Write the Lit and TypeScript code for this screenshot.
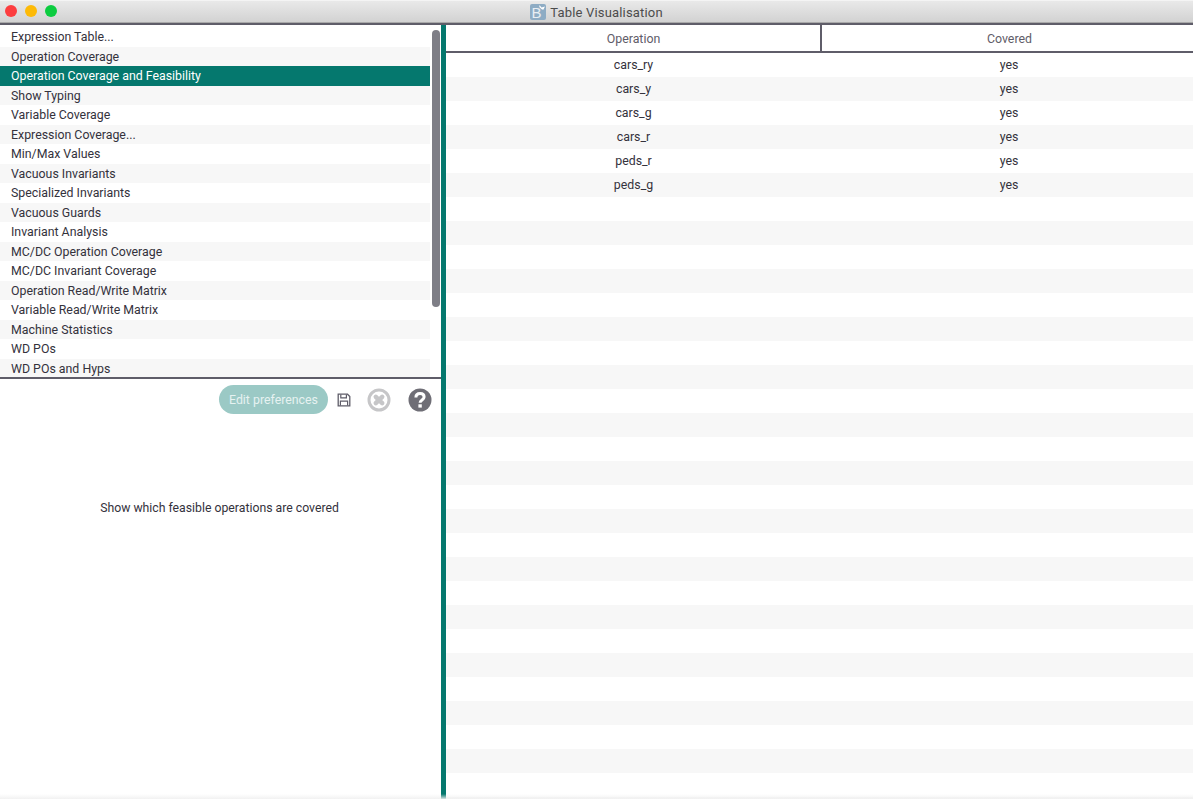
import { LitElement, html, css, svg } from 'lit';
import { customElement, state } from 'lit/decorators.js';

const TASKS = [
  'Expression Table...',
  'Operation Coverage',
  'Operation Coverage and Feasibility',
  'Show Typing',
  'Variable Coverage',
  'Expression Coverage...',
  'Min/Max Values',
  'Vacuous Invariants',
  'Specialized Invariants',
  'Vacuous Guards',
  'Invariant Analysis',
  'MC/DC Operation Coverage',
  'MC/DC Invariant Coverage',
  'Operation Read/Write Matrix',
  'Variable Read/Write Matrix',
  'Machine Statistics',
  'WD POs',
  'WD POs and Hyps',
];

const RESULTS = ['cars_ry', 'cars_y', 'cars_g', 'cars_r', 'peds_r', 'peds_g'];
const ROW_COUNT = 32;

const saveIcon = svg`<svg class="save" viewBox="0 0 14 14" width="14" height="14">
  <path fill="none" stroke="#5f5d69" stroke-width="1.3" d="M1.2 1.2h9.3l2.3 2.3v9.3H1.2z"/>
  <path fill="none" stroke="#5f5d69" stroke-width="1.2" d="M3.8 1.5v3.4h5.6V1.5M3.4 12.5V8.2h7.2v4.3"/>
</svg>`;

const cancelIcon = svg`<svg viewBox="0 0 24 24" width="24" height="24">
  <circle cx="12" cy="12" r="10" fill="none" stroke="#c6c6c8" stroke-width="3"/>
  <path stroke="#c6c6c8" stroke-width="4.500" stroke-linecap="round" d="M8.800 8.800l6.400 6.400M15.200 8.800l-6.400 6.400"/>
</svg>`;

const helpIcon = svg`<svg viewBox="0 0 24 24" width="24" height="24">
  <circle cx="12" cy="12" r="11.500" fill="#6f6e76"/>
  <path fill="none" stroke="#fff" stroke-width="3" d="M7.900 9.600c0-2.500 1.800-4 4.200-4s4 1.400 4 3.500c0 2.900-4 2.900-4 5.700"/>
  <rect x="10.400" y="16.300" width="3.400" height="3.300" fill="#fff"/>
</svg>`;

@customElement('app-root')
export class AppRoot extends LitElement {
  @state() selected = 2;

  static styles = css`
    :host {
      display: block;
      width: 1193px;
      height: 799px;
      overflow: hidden;
      position: relative;
      background: #fff;
      color: #34323c;
      font-family: Roboto, 'Liberation Sans', sans-serif;
      font-size: 12.35px;
    }

    .titlebar {
      height: 23px;
      display: flex;
      align-items: center;
      justify-content: center;
      position: relative;
      background: linear-gradient(#e9e9e9, #d2d2d2);
      border-top: 1px solid #f4f4f4;
      box-sizing: border-box;
      border-bottom: 1px solid #a9a9a9;
      color: #4c4c4c;
      font-size: 13px;
      letter-spacing: 0.18px;
      gap: 4px;
    }
    .lights {
      position: absolute;
      left: 5px;
      top: 4px;
      display: flex;
      gap: 8px;
    }
    .light {
      width: 12px;
      height: 12px;
      border-radius: 50%;
    }
    .red { background: #fc3d3f; }
    .yellow { background: #fdba07; }
    .green { background: #0ccc40; }
    .appicon {
      width: 16px;
      height: 16px;
      display: block;
    }
    .appicon text {
      font-family: 'Liberation Sans', sans-serif;
      font-size: 15px;
      fill: #e8eef3;
    }
    .title { padding-top: 1px; }

    .main {
      height: 776px;
      display: grid;
      grid-template-columns: 441px 5px 1fr;
      border-top: 2px solid #5f5d69;
      box-sizing: border-box;
    }
    .left {
      display: flex;
      flex-direction: column;
      min-height: 0;
    }
    .divider { background: #05786e; }

    .list {
      height: 352px;
      overflow: hidden;
      position: relative;
      padding-top: 2px;
      box-sizing: border-box;
      flex: none;
    }
    .task {
      height: 19.5px;
      width: 430px;
      padding: 1px 0 0 11px;
      box-sizing: border-box;
      line-height: 19.5px;
      white-space: nowrap;
    }
    .task.alt { background: #f7f7f7; }
    .task.sel { background: #05786e; color: #fff; }
    .scroll {
      position: absolute;
      left: 432px;
      top: 5px;
      width: 8px;
      height: 277px;
      border-radius: 4px;
      background: #7e7e86;
    }

    .hsplit {
      height: 2px;
      background: #5f5d69;
      flex: none;
    }
    .detail {
      flex: 1;
      display: flex;
      flex-direction: column;
    }
    .tools {
      display: flex;
      align-items: center;
      height: 29px;
      margin-top: 6px;
      padding-left: 219px;
    }
    .pref {
      width: 109px;
      height: 29px;
      border-radius: 15px;
      background: #9bc9c5;
      color: #e6f2f1;
      display: flex;
      align-items: center;
      justify-content: center;
    }
    .save { margin-left: 9px; }
    .cancel {
      margin-left: 16px;
      display: flex;
    }
    .help {
      margin-left: 17px;
      display: flex;
    }
    .desc {
      margin-top: 86px;
      text-align: center;
      width: 439px;
      line-height: 16px;
      font-size: 12.25px;
    }

    .right {
      min-width: 0;
      display: flex;
      flex-direction: column;
    }
    .thead, .row {
      display: grid;
      grid-template-columns: 375px 376px;
      text-align: center;
      flex: none;
    }
    .thead {
      height: 28px;
      box-sizing: border-box;
      border-bottom: 2px solid #5f5d69;
      color: #5f5d69;
      line-height: 28px;
    }
    .thead div + div {
      border-left: 2px solid #5f5d69;
      margin-left: -1px;
      line-height: 28px;
    }
    .row {
      height: 24px;
      line-height: 24px;
    }
    .row.alt { background: #f7f7f7; }

    .fade {
      position: absolute;
      left: 0;
      right: 0;
      bottom: 0;
      height: 5px;
      background: linear-gradient(rgba(240, 240, 240, 0), rgba(240, 240, 240, 0.900));
      pointer-events: none;
    }
  `;

  render() {
    return html`
      <div class="titlebar">
        <div class="lights">
          <div class="light red"></div>
          <div class="light yellow"></div>
          <div class="light green"></div>
        </div>
        <svg class="appicon" viewBox="0 0 16 16">
          <rect width="16" height="16" rx="2" fill="#8eacc4"/>
          <text x="1.500" y="14">B</text>
          <path fill="#fff" d="M9.500 1l2 2.600 3.500-1.100-1.700 3.300-1.600-.5-2.400-2.300z"/>
        </svg>
        <span class="title">Table Visualisation</span>
      </div>
      <div class="main">
        <div class="left">
          <div class="list">
            ${TASKS.map(
              (t, i) => html`<div class="task ${i % 2 ? 'alt' : ''} ${i === this.selected ? 'sel' : ''}">${t}</div>`
            )}
            <div class="scroll"></div>
          </div>
          <div class="hsplit"></div>
          <div class="detail">
            <div class="tools">
              <div class="pref">Edit preferences</div>
              ${saveIcon}
              <div class="cancel">${cancelIcon}</div>
              <div class="help">${helpIcon}</div>
            </div>
            <div class="desc">Show which feasible operations are covered</div>
          </div>
        </div>
        <div class="divider"></div>
        <div class="right">
          <div class="thead"><div>Operation</div><div>Covered</div></div>
          ${Array.from({ length: ROW_COUNT }, (_, i) => html`
            <div class="row ${i % 2 ? 'alt' : ''}">
              <div>${RESULTS[i] ?? ''}</div>
              <div>${RESULTS[i] ? 'yes' : ''}</div>
            </div>
          `)}
        </div>
      </div>
      <div class="fade"></div>
    `;
  }
}
